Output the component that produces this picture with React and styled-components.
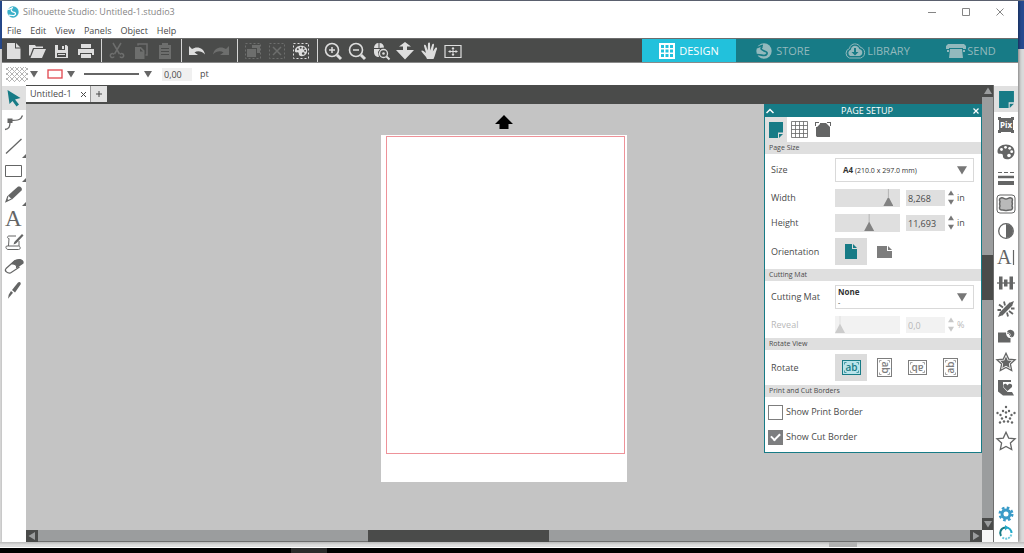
import React, { useState } from 'react'
import styled, { createGlobalStyle, css } from 'styled-components'

const teal = '#177b86'
const dark = '#4a4b4a'
const icon = '#646565'

const GlobalStyle = createGlobalStyle`
  * {
    box-sizing: border-box;
  }
  body {
    margin: 0;
    overflow: hidden;
    background: #000;
    color: #4a4a4a;
    font-family: "Open Sans", "Noto Sans", sans-serif;
    font-size: 9px;
    line-height: 14px;
  }
  button, input, select {
    font: inherit;
    color: inherit;
    margin: 0;
    padding: 0;
    border: none;
    border-radius: 0;
  }
  button {
    display: flex;
    align-items: center;
    justify-content: center;
    background: none;
  }
  svg {
    display: block;
    flex: none;
  }
`

/* ---------- window frame ---------- */

const Desktop = styled.div`
  display: flex;
  flex-direction: column;
  height: 100vh;
  padding-top: 1px;
  background: linear-gradient(#6d7485 1px, #264a90 1px, #264a90 49px, #dadada 49px);
`

const Window = styled.div`
  display: flex;
  flex-direction: column;
  flex: 1;
  min-height: 0;
  margin: 0 6px 0 2px;
  background: #fff;
  box-shadow: 1px 0 3px rgba(0, 0, 0, .45);
`

const TitleBar = styled.header`
  display: flex;
  align-items: center;
  height: 22px;
  padding: 0 7px 0 4px;
  gap: 3px;
  color: #858585;
  > h1 {
    flex: 1;
    margin: 0;
    font-size: 9px;
    font-weight: normal;
  }
`

const WindowButton = styled.button`
  width: 22px;
  height: 20px;
  margin-left: 9px;
`

const MenuBar = styled.nav`
  display: flex;
  gap: 9px;
  height: 15px;
  padding: 1px 0 0 5px;
`

const Menu = styled.button`
  align-items: flex-start;
`

/* ---------- main toolbar ---------- */

const Toolbar = styled.div`
  display: flex;
  height: 25px;
  background: ${dark};
  border-top: 1px solid #6c6c6c;
  border-bottom: 1px solid #8a8a8a;
`

const ToolGroup = styled.div`
  display: flex;
  align-items: center;
  padding: 0 4px 0 3px;
  border-right: 1px solid #d6d6d6;
  &:first-child {
    padding: 0 3px 0 0;
  }
  &:last-of-type {
    border: none;
  }
`

const ToolButton = styled.button`
  width: 24px;
  height: 23px;
  color: ${props => props.disabled ? '#6d6e6d' : '#dedede'};
`

const ModeTabs = styled.nav`
  display: grid;
  grid-template-columns: repeat(4, 94px);
  margin-left: auto;
  background: ${teal};
`

const ModeTab = styled.button`
  gap: ${props => props.$tight ? '1px' : '4px'};
  font-size: 11px;
  color: ${props => props.$active ? '#fff' : '#93b9bd'};
  background: ${props => props.$active ? '#22c1dc' : 'none'};
`

/* ---------- quick style bar ---------- */

const StyleBar = styled.div`
  display: flex;
  align-items: center;
  height: 22px;
  padding-left: 4px;
`

const StyleButton = styled.button`
  gap: ${props => props.$gap || '2px'};
  margin-right: 9px;
`

const WidthInput = styled.input`
  width: 30px;
  height: 13px;
  margin: 0 8px 0 1px;
  padding: 2px 0 0 2px;
  background: #f0f0f0;
`

/* ---------- work area ---------- */

const Body = styled.main`
  display: flex;
  flex: 1;
  min-height: 0;
`

const ToolColumn = styled.nav`
  width: 24px;
  padding-top: 1px;
`

const SideTool = styled.button`
  position: relative;
  width: 24px;
  height: 24px;
  color: ${icon};
  background: ${props => props.$active ? '#e0e0e0' : 'none'};
  ${props => props.$more && css`
    &:after {
      content: "";
      position: absolute;
      right: 0;
      bottom: 0;
      border: 2px solid;
      border-color: transparent ${icon} ${icon} transparent;
    }
  `}
`

const Workspace = styled.section`
  display: flex;
  flex-direction: column;
  flex: 1;
`

const TabStrip = styled.div`
  display: flex;
  height: 19px;
  padding: 1px 0 2px;
  background: ${dark};
`

const DocTab = styled.div`
  display: flex;
  align-items: center;
  justify-content: space-between;
  width: 65px;
  padding: 0 4px;
  background: #fff;
  border-right: 1px solid #999;
  white-space: nowrap;
`

const NewTab = styled.button`
  width: 16px;
  background: #e2e2e2;
`

const Canvas = styled.div`
  position: relative;
  display: flex;
  flex-direction: column;
  align-items: center;
  flex: 1;
  padding-top: 10px;
  background: #c4c4c4;
`

const Page = styled.div`
  width: 246px;
  height: 347px;
  margin-top: 6px;
  padding: 1px 2px 28px 5px;
  background: #fff;
`

const CutBorder = styled.div`
  height: 100%;
  border: 1px solid #ee9299;
`

const ScrollColumn = styled.div`
  display: flex;
  flex-direction: column;
  width: 11px;
  background: #9b9d9e;
`

const ScrollRow = styled.div`
  display: flex;
  height: 12px;
  background: #9b9d9e;
  border-bottom: 1px solid #6e6e6e;
`

const ScrollButton = styled.button`
  width: 12px;
  height: 12px;
  background: ${dark};
  ${ScrollColumn} & {
    width: 11px;
  }
`

const Track = styled.div`
  display: flex;
  flex: 1;
  flex-direction: ${props => props.$row ? 'row' : 'column'};
`

const Thumb = styled.div`
  background: ${dark};
  margin: ${props => props.$row ? '0 0 0 35.4%' : '158px 0 0'};
  width: ${props => props.$row ? '19.4%' : '11px'};
  height: ${props => props.$row ? '12px' : '45px'};
`

const Corner = styled.div`
  height: 12px;
  background: #f7f7f7;
`

const Rail = styled.nav`
  display: flex;
  flex-direction: column;
  width: 25px;
  padding-top: 1px;
  border-left: 1px solid #6e6e6e;
`

const RailTools = styled.div`
  display: flex;
  flex-direction: column;
  height: 368px;
  margin-bottom: auto;
`

const RailButton = styled.button`
  flex: 1;
  color: ${icon};
  background: ${props => props.$active ? '#e0e0e0' : 'none'};
`

const RailFooter = styled(RailButton)`
  flex: none;
  height: 19px;
`

/* ---------- page setup panel ---------- */

const Panel = styled.aside`
  position: absolute;
  top: 0;
  right: 0;
  width: 218px;
  background: #fff;
  border: 1px solid ${teal};
  border-top: none;
`

const PanelHeader = styled.header`
  display: flex;
  align-items: center;
  justify-content: space-between;
  height: 13px;
  color: #fff;
  background: ${teal};
  h2 {
    margin: 0 12px 0 0;
    font-size: 9px;
    font-weight: normal;
    line-height: 12px;
  }
  button {
    width: 10px;
    height: 12px;
  }
`

const PanelTabs = styled.div`
  display: flex;
  height: 25px;
`

const PanelTab = styled.button`
  width: ${props => props.$active ? '22px' : '24px'};
  color: ${icon};
  background: ${props => props.$active ? '#dfdfdf' : 'none'};
`

const Section = styled.h3`
  height: 12px;
  margin: 0;
  padding-left: 4px;
  background: #dfdfdf;
  font-size: 7px;
  font-weight: normal;
  line-height: 12px;
`

const Fields = styled.div`
  display: grid;
  gap: 6px;
  padding: 4px 7px 4px 6px;
`

const Field = styled.div`
  display: grid;
  grid-template-columns: 64px 1fr;
  align-items: center;
  min-height: 19px;
  opacity: ${props => props.$disabled ? .4 : 1};
`

const Controls = styled.div`
  display: flex;
  align-items: center;
`

const DropDown = styled.div`
  position: relative;
  display: flex;
  align-items: center;
  justify-content: space-between;
  height: 24px;
  padding: 0 6px 0 ${props => props.$inset};
  border: 1px solid #d9d9d9;
  color: #333;
  font-size: 7px;
  line-height: 11px;
  strong {
    display: ${props => props.$stacked ? 'block' : 'inline'};
    font-size: 8px;
    font-weight: 700;
  }
  select {
    position: absolute;
    inset: 0;
    width: 100%;
    opacity: 0;
  }
`

const Slider = styled.input`
  appearance: none;
  width: 65px;
  height: 18px;
  margin-right: 6px;
  background: #dfdfdf;
  &::-webkit-slider-thumb {
    appearance: none;
    width: 10px;
    height: 17px;
    background: linear-gradient(#b4b4b4 50%, #828282 50%);
    clip-path: polygon(45% 0, 55% 0, 55% 50%, 100% 100%, 0 100%, 45% 50%);
  }
`

const NumberBox = styled.input`
  width: 39px;
  height: 16px;
  padding: 2px 0 0 2px;
  background: #dfdfdf;
`

const Spinner = styled.div`
  display: grid;
  gap: 3px;
  width: 12px;
  button {
    height: 6px;
  }
`

const OptionButton = styled.button`
  width: 32px;
  height: 27px;
  margin-right: 1px;
  color: ${props => props['aria-pressed'] ? teal : '#7d7d7d'};
  background: ${props => props['aria-pressed'] ? '#dcdcdc' : 'none'};
`

const Checks = styled.div`
  display: grid;
  gap: 9px;
  padding: 7px 3px;
`

const CheckLabel = styled.label`
  display: flex;
  align-items: center;
  gap: 3px;
  height: 16px;
`

const Check = styled.input`
  appearance: none;
  width: 15px;
  height: 15px;
  border: 1px solid #7d7d7d;
  &:checked {
    display: grid;
    place-items: center;
    background: #7d7e80;
  }
  &:checked:after {
    content: "";
    width: 7px;
    height: 4px;
    margin-bottom: 2px;
    border: solid #fff;
    border-width: 0 0 2px 2px;
    transform: rotate(-45deg);
  }
`

/* ---------- whatever is under the window ---------- */

const Under = styled.div`
  display: flex;
  height: 6px;
  background: linear-gradient(#b9b9b9, #dedede 3px);
  border-bottom: 1px solid #fff;
  padding-left: 81%;
  > span {
    width: 28px;
    background: #b2b2b2;
  }
`

const TaskBar = styled.footer`
  height: 5px;
  background: #000;
  padding-left: 28.4%;
  > span {
    display: block;
    width: 36px;
    height: 100%;
    background: #2b2b2b;
  }
`

/* ---------- drawings ---------- */

const Glyph = ({ children, w = 24, h = w, box }) => (
  <svg width={w} height={h} viewBox={box || `0 0 ${w} ${h}`} fill="currentColor" aria-hidden="true">
    {children}
  </svg>
)

const Triangle = ({ size = 8, dir = 'down', color = '#666' }) => {
  const turn = { down: 0, left: 90, up: 180, right: 270 }[dir]
  return (
    <Glyph w={size} box="0 0 8 8">
      <path d="M0 1h8L4 7.5z" fill={color} transform={`rotate(${turn} 4 4)`} />
    </Glyph>
  )
}

const line = (d, width = 1.5, extra) => (
  <path d={d} fill="none" stroke="currentColor" strokeWidth={width} {...extra} />
)

const palette = 'M12 4.5c-5 0-8.5 3-8.5 7 0 2 1.2 2.6 2.600 2.300 1.800-.4 2.900.3 2.800 2-.1 2.200 1.200 3.500 4.100 3.500 4.500 0 7.500-3.400 7.500-7.600S17 4.500 12 4.500z'

const Palette = ({ holes = dark, children, small }) => (
  <Glyph>
    <g transform={small ? 'translate(3.4 3.4) scale(.72)' : undefined}>
      <path d={palette} />
      <g fill={holes}>
        <circle cx="7.500" cy="9.500" r="1.400" />
        <circle cx="11.500" cy="7.300" r="1.400" />
        <circle cx="15.700" cy="8.300" r="1.400" />
        <circle cx="17.700" cy="11.700" r="1.400" />
        <circle cx="15" cy="15.500" r="1.800" />
      </g>
    </g>
    {children}
  </Glyph>
)

const fileTools = [
  ['New', <Glyph><path d="M5 4h8v5.500h5.500V20H5zM14 4l4.500 4.500H14z" /></Glyph>],
  ['Open', <Glyph><path d="M3 6h6l1 1.500h7V9H7L4 17l-1-1zM8 10h12l-4 9H4.500z" /></Glyph>],
  ['Save', <Glyph><path fillRule="evenodd" d="M5 6h11.500L18 7.500V19H5zM8 6v5h7V6zM7 14v4h9v-4z" /><path d="M12 7h2v3h-2zM8 15h7v1H8z" /></Glyph>],
  ['Print', <Glyph><path d="M7 5h10v4H7zM4 10h16v6h-2v-2H6v2H4zM7 15h10v4H7z" /></Glyph>],
]

const clipTools = [
  ['Cut', <Glyph>{line('M8 4l6.500 11M16 4L9.500 15')}{line('M9 15.500a2 2 0 1 0 .1 2M15 15.500a2 2 0 1 1-.1 2')}</Glyph>],
  ['Copy', <Glyph>{line('M9 6.500V5h9v11h-1.500')}<path fillRule="evenodd" d="M6 8h6l3.500 3.500V20H6zm5 1.500v3h3z" /></Glyph>],
  ['Paste', <Glyph><path fillRule="evenodd" d="M6 6h3V4h6v2h3v14H6zM8 9v1h8V9zm0 3v1h8v-1zm0 3v1h8v-1z" /></Glyph>],
]

const historyTools = [
  ['Undo', <Glyph><path d="M4 7v9h9l-3.500-2.600c3-2 7.500-1.200 10.500 2.100-1-6.500-8-9-13-5.500z" /></Glyph>],
  ['Redo', <Glyph><path d="M20 7v9h-9l3.500-2.600c-3-2-7.500-1.200-10.500 2.100 1-6.500 8-9 13-5.500z" /></Glyph>],
]

const dashes = line('M4.500 4.500h15v15h-15z', 1, { strokeDasharray: '2 2' })

const selectTools = [
  ['Select all', <Glyph>{dashes}<path d="M11 6h8v8h-3v-5h-5zM6 10h9v8H6z" /></Glyph>],
  ['Deselect all', <Glyph>{dashes}{line('M8 8l8 8M16 8l-8 8')}</Glyph>],
  ['Select by colour', <Palette small>{dashes}</Palette>],
]

const viewTools = [
  ['Zoom in', <Glyph><circle cx="11" cy="11" r="6.500" fill="none" stroke="currentColor" strokeWidth="1.600" />{line('M16 16l4 4', 3)}{line('M8 11h6M11 8v6')}</Glyph>],
  ['Zoom out', <Glyph><circle cx="11" cy="11" r="6.500" fill="none" stroke="currentColor" strokeWidth="1.600" />{line('M16 16l4 4', 3)}{line('M8 11h6')}</Glyph>],
  ['Zoom selection', <Glyph><path d="M5 9c0-3 2-5 4.500-5v5zM10.500 4C13 4 15 6 15 8.500l-4.500.5zM5 10h6l-2 3 1 5c-3 0-5-2-5-5z" /><circle cx="14.500" cy="14.500" r="4" fill="none" stroke="currentColor" strokeWidth="1.300" />{line('M17.500 17.500l3 3', 2)}<circle cx="14.500" cy="14.500" r="1.300" /></Glyph>],
  ['Zoom drag', <Glyph><path d="M12 3l6 4.500h-4V11h7l-9 9.500L3 11h7V7.500H6z" /></Glyph>],
  ['Pan', <Glyph><path d="M10 20c-1-3-3-4-5.500-7.500C4 11.300 5.500 11 6.500 12L9 14 7 7c-.2-1.500 1.500-1.700 2-.3l1.700 4.800L11 4.500c.2-1.300 2-1.300 2 0l.2 7 2-6c.5-1.300 2-.8 1.800.5l-1.200 6.500 2.500-3.500c.8-1 2.200-.2 1.700 1-1.500 3.500-2 7-3.500 10z" /></Glyph>],
  ['Fit to window', <Glyph>{line('M4 6.500h16v12H4z', 1.200)}{line('M8 12.500h8M12 8.500v8', 1)}<path d="M7 12.500l2.500-1.500v3zM17 12.500L14.500 11v3zM12 8l-1.500 2h3zM12 17l-1.500-2h3z" /></Glyph>],
]

const SilhouetteLogo = ({ size, cut }) => (
  <Glyph w={size} box="0 0 16 16">
    <circle cx="8" cy="8" r="7.700" />
    <path d="M0 4.500c3 .6 3.500-2 7-2.200M6.500 3.500C3 6 7 7.500 9.500 8.500c3.200 1.300 1 4-1.500 4-2.200 0-3-1-7-1" fill="none" stroke={cut} strokeWidth="1.700" />
  </Glyph>
)

const sideTools = [
  ['Select', <Glyph><path d="M5.500 4l13 8-5.500 1.500 4 5-2.500 2-4-5.500L7.500 18z" fill={teal} /></Glyph>],
  ['Edit points', <Glyph><path d="M5.500 8.500h5v4.500h-5z" />{line('M8 12c0 5-1 7-5 7.500M8 10.500c9 0 11-1 12.500-5', 1.300)}</Glyph>],
  ['Line', <Glyph>{line('M4 19.500L19.500 5', 1.300)}</Glyph>, true],
  ['Rectangle', <Glyph>{line('M3.500 7.500h16v11h-16z', 1)}</Glyph>, true],
  ['Freehand', <Glyph><path d="M15.500 5c2-1.500 5.500 1 4 3.500L10 17.500l-4-4z" />{line('M6 14l-2 5.500 5.500-2.500', 1.200)}<path d="M4 19.500l1-3 1.500 2z" /></Glyph>, true],
  ['Text', <Glyph><text x="3" y="20" fontFamily="Liberation Serif, serif" fontSize="23">A</text></Glyph>],
  ['Sketch', <Glyph>{line('M14 6H7c-2 0-2 2.500 0 2.500L6.500 16H5c-2 0-1 3.500 1 3.500h10.500c2.500 0 2-3.500 0-3.500H6.500M17 16v-5', 1)}<path d="M20 4l1.500 1.500-7.500 8-2.500 1 .8-2.500z" /></Glyph>],
  ['Eraser', <Glyph>{line('M4 14.500l9-8M4 14.500c-2 2.500 1.500 5 4.500 4.500l9-6M9.500 10c3-.5 6 1 5 4', 1.200)}<path d="M9 10l4-4c4-2.500 10-.5 8.500 3.500L15 14c.5-3-2.500-4.500-6-4z" /></Glyph>],
  ['Knife', <Glyph><path d="M16 4.500c1.500-1.500 3.500 0 2.500 2l-5.500 8-3-2.500z" /><path d="M9 13l2 1.700-5 6 .7-4z" /></Glyph>],
]

const star = 'M12 3.200l2.700 5.900 6.400.7-4.700 4.300 1.300 6.500-5.700-3.200-5.700 3.200 1.300-6.500-4.700-4.300 6.400-.7z'

const PageCorner = ({ size = 16 }) => (
  <Glyph w={size} box="0 0 16 16">
    <path d="M1 0h14v10.500h-5V16H1z" fill={teal} />
    <path d="M11 12h4l-4 4z" fill={teal} />
  </Glyph>
)

const railTools = [
  ['Page setup', <PageCorner size={17} />],
  ['PixScan', <Glyph><path d="M4 4h3v1h10V4h3v3h-1v10h1v3h-3v-1H7v1H4v-3h1V7H4z" /><text x="12" y="15" textAnchor="middle" fontSize="8" fontWeight="700" fill="#fff">Pix</text></Glyph>],
  ['Fill', <Palette holes="#fff" />],
  ['Line style', <Glyph>{line('M4 6.500h16', 1.200, { strokeDasharray: '4 2' })}{line('M4 11h16', 2.500)}{line('M4 17h16', 4)}</Glyph>],
  ['Trace', <Glyph><rect x="3" y="3" width="18" height="18" rx="3" fill="none" stroke="currentColor" /><path d="M7 6c2-1 3 1 5 1s3-2 5-1c2 0 1.500 2.500 1 4 1 1.500 0 3 0 4 1 1.500.5 4-1.500 4-1.500-.5-3 .5-4.500.5S9 17.500 7.500 18c-2 0-2.500-2-1.500-4-.5-1.500-.5-3 0-4.500C5 8 5.500 6 7 6z" fill="#b9b9b9" stroke="currentColor" strokeWidth="1.500" /></Glyph>],
  ['Image effects', <Glyph><circle cx="12" cy="12" r="7.300" fill="none" stroke="currentColor" strokeWidth="1.300" /><path d="M12 5a7 7 0 0 1 0 14z" /></Glyph>],
  ['Text style', <Glyph><text x="3" y="19" fontFamily="Liberation Serif, serif" fontSize="20">A</text>{line('M19.500 5v15', 1.200)}</Glyph>],
  ['Align', <Glyph>{line('M3 12h18', 1.300)}<path d="M5 5.500h3.500v13H5zM10 8.500h3.500v7H10zM15.500 5.500H19v13h-3.500z" /></Glyph>],
  ['Transform', <Glyph>{line('M7 17l10-10', 4)}{line('M10 4.500l1 4M5 7.500l4 3M14 19.500l-1-4M19 17l-4-3M3.500 13h3.500M20.500 11.500H17', 1.800)}<path d="M4 20l2-5 3 3zM20 4l-5 2 3 3z" /></Glyph>],
  ['Modify', <Glyph><path d="M4 8.500h8c0 3.500 2 5.500 4.500 5.500v4.500H4z" /><path d="M13 7.500a4 4 0 1 1 4.500 6l-1-3.500z" />{line('M13 9c2 0 3.500 1.500 3.500 4', 1)}</Glyph>],
  ['Offset', <Glyph><path d={star} fill="none" stroke="currentColor" strokeWidth="1.300" /><path d={star} transform="translate(4.200 4.500) scale(.65)" /></Glyph>],
  ['Shape library', <Glyph><path d="M4 4h13v2H9v5l4.500 5H18l2 3.500H9l-5-4z" /><path d="M13.500 15L9.500 11c-1-3 2.500-4.500 4-1.500 1.500-3 5.500-1.500 4.500 1.500z" /></Glyph>],
  ['Stipple', <Glyph>{[[12, 4], [9, 8], [15, 8], [12, 9.500], [3.500, 10], [20.500, 10], [6.500, 12], [17.500, 12], [8, 15.500], [12, 14], [16, 15.500], [6, 19.500], [10, 18.500], [14, 18.500], [18, 19.500]].map(([x, y]) => <circle key={`${x}-${y}`} cx={x} cy={y} r="1.200" />)}</Glyph>],
  ['Sketch pen', <Glyph><path d={star} fill="none" stroke="currentColor" strokeWidth="1.300" /></Glyph>],
]

const Gear = () => (
  <Glyph w={16} box="0 0 16 16">
    <circle cx="8" cy="8" r="6.300" fill="none" stroke="#3a9bc8" strokeWidth="2.400" strokeDasharray="2.600 2.350" />
    <circle cx="8" cy="8" r="4" fill="none" stroke="#3a9bc8" strokeWidth="3" />
  </Glyph>
)

const Sync = () => (
  <Glyph w={16} box="0 0 16 16">
    <g fill="none" strokeWidth="2">
      <path d="M8 2.500a5.500 5.500 0 0 1 5.500 5.500" stroke="#22a9c9" />
      <path d="M13.300 9.500A5.500 5.500 0 0 1 4 12" stroke="#6cc9dc" strokeDasharray="2 1" />
      <path d="M3 11A5.500 5.500 0 0 1 7 2.600" stroke={teal} />
    </g>
    <path d="M7 0l3.500 2.500L7 5.500z" fill="#22a9c9" />
  </Glyph>
)

const modes = [
  ['DESIGN', <Glyph w={16}><path fillRule="evenodd" d="M0 0h16v16H0zM2 2v3h3V2zm4.500 0v3h3V2zM11 2v3h3V2zM2 6.500v3h3v-3zm4.500 0v3h3v-3zm4.500 0v3h3v-3zM2 11v3h3v-3zm4.500 0v3h3v-3zm4.500 0v3h3v-3z" /></Glyph>],
  ['STORE', <SilhouetteLogo size={16} cut={teal} />],
  ['LIBRARY', <Glyph w={22} h={16}><path d="M5.500 15a5 5 0 0 1 0-9.500c1-6 9-6 11-1 5 .5 6 9 0 10.500z" fill="none" stroke="currentColor" /><path fillRule="evenodd" d="M6 13a3.500 3.500 0 0 1 .8-6.300C7.500 1.500 14 1.800 15.300 6c4 .5 4 6.500.2 7zM10 5v4H7.500l3.500 3.500L14.500 9H12V5z" /></Glyph>, true],
  ['SEND', <Glyph w={20} h={16}><path d="M2 1h16l2 2v3h-3V5H3v1H0V3zM4 6h12l1 9H3zM1 7h2v2H1zM17 7h2v2h-2z" /></Glyph>, true],
]

const AbIcon = ({ turn, active }) => {
  const upright = turn % 180 !== 0
  const size = upright ? [15, 19] : [19, 15]
  return (
    <Glyph w={size[0]} h={size[1]}>
      <g transform={`translate(${size[0] / 2} ${size[1] / 2}) rotate(${turn})`}>
        <rect x="-9" y="-7" width="18" height="14" fill={active ? '#b9e3ea' : '#fff'} stroke="currentColor" />
        {line('M-7-3v-2h2M7-3v-2h-2M-7 3v2h2M7 3v2h-2', 1, { opacity: .7 })}
        <text y="3" textAnchor="middle" fontSize="10" fontWeight="600">ab</text>
      </g>
    </Glyph>
  )
}

/* ---------- composed parts ---------- */

const Tools = ({ items, disabled }) => (
  <ToolGroup>
    {items.map(([name, art], i) => (
      <ToolButton key={name} aria-label={name} disabled={disabled ? disabled(i) : false}>{art}</ToolButton>
    ))}
  </ToolGroup>
)

const Measure = ({ id, label, value, unit, position, disabled }) => {
  const [text, setText] = useState(value)
  const [pos, setPos] = useState(position)
  return (
    <Field $disabled={disabled}>
      <label htmlFor={id}>{label}</label>
      <Controls>
        <Slider type="range" aria-label={`${label} slider`} value={pos} disabled={disabled} onChange={e => setPos(e.target.value)} />
        <NumberBox id={id} value={text} disabled={disabled} onChange={e => setText(e.target.value)} />
        <Spinner>
          <button aria-label={`Increase ${label}`} disabled={disabled}><Triangle size={6} dir="up" color="#777" /></button>
          <button aria-label={`Decrease ${label}`} disabled={disabled}><Triangle size={6} color="#777" /></button>
        </Spinner>
        {unit}
      </Controls>
    </Field>
  )
}

const PageSetup = () => {
  const [orientation, setOrientation] = useState('Portrait')
  const [rotation, setRotation] = useState(0)
  const [printBorder, setPrintBorder] = useState(false)
  const [cutBorder, setCutBorder] = useState(true)
  return (
    <Panel>
      <PanelHeader>
        <button aria-label="Collapse"><Glyph w={8}>{line('M0.500 6L4 2.500 7.500 6')}</Glyph></button>
        <h2>PAGE SETUP</h2>
        <button aria-label="Close panel"><Glyph w={6}>{line('M.5.5l5 5M5.500.5l-5 5', 1.200)}</Glyph></button>
      </PanelHeader>
      <PanelTabs>
        <PanelTab $active aria-label="Page"><PageCorner /></PanelTab>
        <PanelTab aria-label="Grid"><Glyph w={17}>{line('M.5.5h16v16H.5zM.5 4.500h16M.5 8.500h16M.5 12.500h16M4.500.5v16M8.500.5v16M12.500.5v16', 1, { opacity: .8 })}</Glyph></PanelTab>
        <PanelTab aria-label="Registration marks"><Glyph w={16}><path d="M0 0h4v1H1v3H0zM5 1h6l4 4v10H2l-1-1V5h1l3-3zM12 0h4v4h-1V1h-3z" /></Glyph></PanelTab>
      </PanelTabs>

      <Section>Page Size</Section>
      <Fields>
        <Field>
          <label htmlFor="size">Size</label>
          <DropDown $inset="7px">
            <span><strong>A4</strong> (210.0 x 297.0 mm)</span>
            <Triangle size={10} color="#777" />
            <select id="size"><option>A4</option></select>
          </DropDown>
        </Field>
        <Measure id="width" label="Width" value="8,268" unit="in" position={88} />
        <Measure id="height" label="Height" value="11,693" unit="in" position={53} />
        <Field>
          <span>Orientation</span>
          <Controls>
            <OptionButton aria-label="Portrait" aria-pressed={orientation === 'Portrait'} onClick={() => setOrientation('Portrait')}>
              <Glyph w={12} h={15}><path d="M0 0h7v5h5v10H0zM8 0l4 4H8z" /></Glyph>
            </OptionButton>
            <OptionButton aria-label="Landscape" aria-pressed={orientation === 'Landscape'} onClick={() => setOrientation('Landscape')}>
              <Glyph w={15} h={12}><path d="M0 0h10v5h5v7H0zM11 0l4 4h-4z" /></Glyph>
            </OptionButton>
          </Controls>
        </Field>
      </Fields>

      <Section>Cutting Mat</Section>
      <Fields>
        <Field>
          <label htmlFor="mat">Cutting Mat</label>
          <DropDown $inset="2px" $stacked>
            <span><strong>None</strong>-</span>
            <Triangle size={10} color="#777" />
            <select id="mat"><option>None</option></select>
          </DropDown>
        </Field>
        <Measure id="reveal" label="Reveal" value="0,0" unit="%" position={0} disabled />
      </Fields>

      <Section>Rotate View</Section>
      <Fields>
        <Field>
          <span>Rotate</span>
          <Controls>
            {[0, 90, 180, 270].map(turn => (
              <OptionButton key={turn} aria-label={`Rotate ${turn}`} aria-pressed={rotation === turn} onClick={() => setRotation(turn)}>
                <AbIcon turn={turn} active={rotation === turn} />
              </OptionButton>
            ))}
          </Controls>
        </Field>
      </Fields>

      <Section>Print and Cut Borders</Section>
      <Checks>
        <CheckLabel>
          <Check type="checkbox" checked={printBorder} onChange={e => setPrintBorder(e.target.checked)} />
          Show Print Border
        </CheckLabel>
        <CheckLabel>
          <Check type="checkbox" checked={cutBorder} onChange={e => setCutBorder(e.target.checked)} />
          Show Cut Border
        </CheckLabel>
      </Checks>
    </Panel>
  )
}

const App = () => {
  const [lineWidth, setLineWidth] = useState('0,00')
  return (
    <Desktop>
      <GlobalStyle />
      <Window>
        <TitleBar>
          <Glyph w={14} box="0 0 16 16">
            <circle cx="8" cy="8" r="6.500" fill="#3bb0c9" />
            <path d="M2 5c3 0 4-1.500 6-2M6.500 5C5 7 8 8 9.500 8.500c3 1 .5 4-1.500 3.500-2-.4-3-.5-5-.5" fill="none" stroke="#fff" strokeWidth="1.400" />
          </Glyph>
          <h1>Silhouette Studio: Untitled-1.studio3</h1>
          <WindowButton aria-label="Minimize"><Glyph w={8}>{line('M0 4.500h8', 1)}</Glyph></WindowButton>
          <WindowButton aria-label="Maximize"><Glyph w={8}>{line('M.5.5h7v7h-7z', 1)}</Glyph></WindowButton>
          <WindowButton aria-label="Close"><Glyph w={8}>{line('M.5.5l7 7M7.500.5l-7 7', 1)}</Glyph></WindowButton>
        </TitleBar>
        <MenuBar>
          {['File', 'Edit', 'View', 'Panels', 'Object', 'Help'].map(name => <Menu key={name}>{name}</Menu>)}
        </MenuBar>
        <Toolbar>
          <Tools items={fileTools} />
          <Tools items={clipTools} disabled={() => true} />
          <Tools items={historyTools} disabled={i => i === 1} />
          <Tools items={selectTools} disabled={i => i < 2} />
          <Tools items={viewTools} />
          <ModeTabs>
            {modes.map(([name, art, tight], i) => (
              <ModeTab key={name} $active={i === 0} $tight={tight}>{art}{name}</ModeTab>
            ))}
          </ModeTabs>
        </Toolbar>
        <StyleBar>
          <StyleButton aria-label="Fill colour">
            <Glyph w={22} h={15}>
              {line('M0 3l3-3M0 8l8-8M0 13l13-13M3 15L18 0M8 15L22 1M13 15l9-9M18 15l4-4M19 0l3 3M14 0l8 8M9 0l13 13M4 0l15 15M0 1l14 14M0 6l9 9M0 11l4 4', 1, { stroke: '#b5b5b5' })}
            </Glyph>
            <Triangle />
          </StyleButton>
          <StyleButton aria-label="Line colour" $gap="4px">
            <Glyph w={16} h={10}><rect x="1" y="1" width="14" height="8" fill="#fff" stroke="#e0454d" strokeWidth="1.300" /></Glyph>
            <Triangle />
          </StyleButton>
          <StyleButton aria-label="Line type" $gap="5px">
            <Glyph w={55} h={8}>{line('M0 4h55', 1.500, { stroke: '#333' })}</Glyph>
            <Triangle />
          </StyleButton>
          <WidthInput id="line-width" value={lineWidth} onChange={e => setLineWidth(e.target.value)} />
          <label htmlFor="line-width">pt</label>
        </StyleBar>
        <Body>
          <ToolColumn>
            {sideTools.map(([name, art, more], i) => (
              <SideTool key={name} aria-label={name} $active={i === 0} $more={more}>{art}</SideTool>
            ))}
          </ToolColumn>
          <Workspace>
            <TabStrip>
              <DocTab>
                Untitled-1
                <button aria-label="Close document"><Glyph w={5}>{line('M0 0l5 5M5 0L0 5', 1)}</Glyph></button>
              </DocTab>
              <NewTab aria-label="New document"><Glyph w={6}>{line('M3 0v6M0 3h6', 1)}</Glyph></NewTab>
            </TabStrip>
            <Canvas>
              <Glyph w={18} h={15}><path d="M9 1l9 9h-4.500v5h-9v-5H0z" fill="#000" /></Glyph>
              <Page><CutBorder /></Page>
              <PageSetup />
            </Canvas>
            <ScrollRow>
              <ScrollButton aria-label="Scroll left"><Triangle dir="left" color="#9b9d9e" /></ScrollButton>
              <Track $row><Thumb $row /></Track>
              <ScrollButton aria-label="Scroll right"><Triangle dir="right" color="#9b9d9e" /></ScrollButton>
            </ScrollRow>
          </Workspace>
          <ScrollColumn>
            <ScrollButton aria-label="Scroll up"><Triangle dir="up" color="#9b9d9e" /></ScrollButton>
            <Track><Thumb /></Track>
            <ScrollButton aria-label="Scroll down"><Triangle color="#9b9d9e" /></ScrollButton>
            <Corner />
          </ScrollColumn>
          <Rail>
            <RailTools>
              {railTools.map(([name, art], i) => (
                <RailButton key={name} aria-label={name} $active={i === 0}>{art}</RailButton>
              ))}
            </RailTools>
            <RailFooter aria-label="Preferences"><Gear /></RailFooter>
            <RailFooter aria-label="Sync"><Sync /></RailFooter>
          </Rail>
        </Body>
      </Window>
      <Under><span /></Under>
      <TaskBar><span /></TaskBar>
    </Desktop>
  )
}

export default App
